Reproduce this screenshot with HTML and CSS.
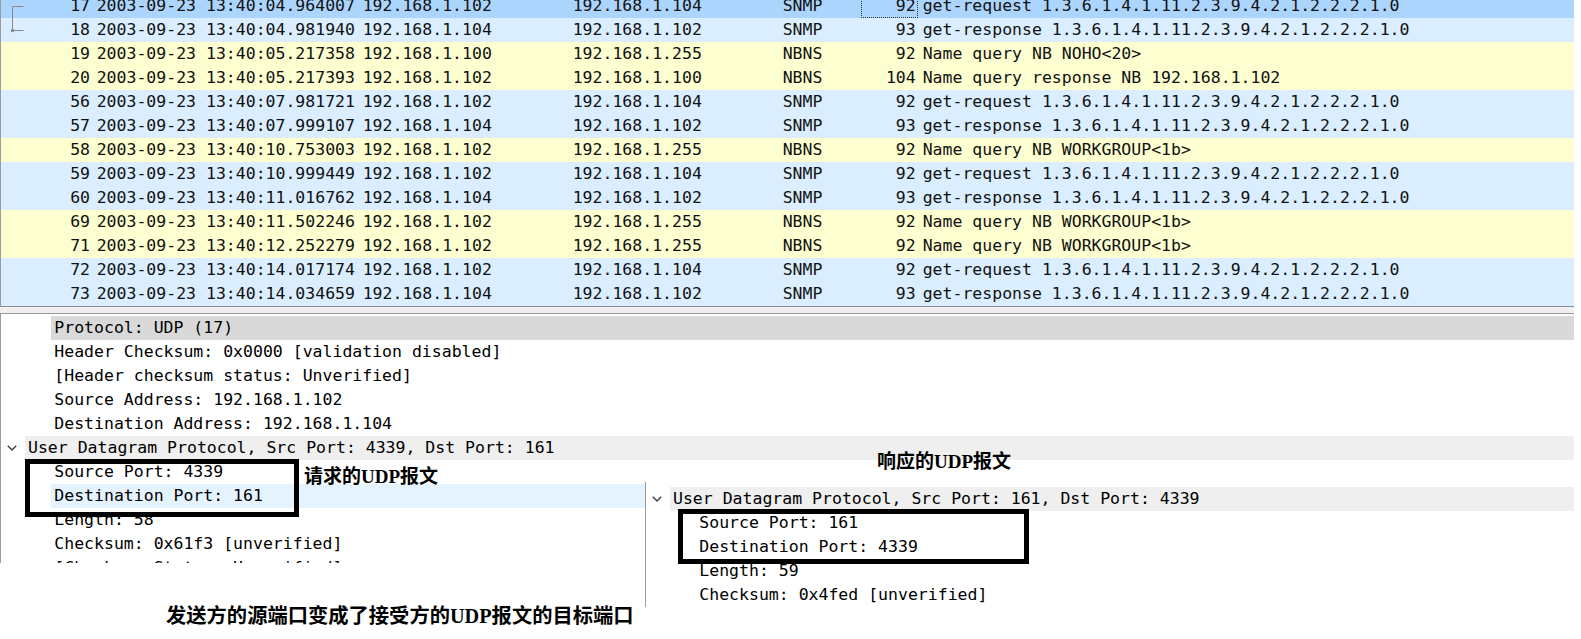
FILE: index.html
```html
<!DOCTYPE html>
<html lang="zh">
<head>
<meta charset="utf-8">
<title>UDP</title>
<link rel="stylesheet" href="styles.css">
</head>
<body>
<div class="canvas">
  <div class="app">
    <div class="packet-list">
      <div class="prow sel">
        <div class="c no"><svg class="rel" width="24" height="24" viewBox="0 0 24 24"><path d="M11.5 12.5H22.5M11.5 12.5V24" stroke="#8a8a8a" stroke-width="1" fill="none"/></svg><span>17</span></div>
        <div class="c">2003-09-23 13:40:04.964007</div><div class="c">192.168.1.102</div><div class="c">192.168.1.104</div><div class="c">SNMP</div><div class="c len focus">92</div><div class="c info">get-request 1.3.6.1.4.1.11.2.3.9.4.2.1.2.2.2.1.0</div>
      </div>
      <div class="prow udp">
        <div class="c no"><svg class="rel" width="24" height="24" viewBox="0 0 24 24"><path d="M11.5 0V12.5H22.5" stroke="#8a8a8a" stroke-width="1" fill="none"/><circle cx="11.5" cy="12.5" r="1.8" fill="#8a8a8a"/></svg><span>18</span></div>
        <div class="c">2003-09-23 13:40:04.981940</div><div class="c">192.168.1.104</div><div class="c">192.168.1.102</div><div class="c">SNMP</div><div class="c len">93</div><div class="c info">get-response 1.3.6.1.4.1.11.2.3.9.4.2.1.2.2.2.1.0</div>
      </div>
      <div class="prow nb">
        <div class="c no"><span>19</span></div>
        <div class="c">2003-09-23 13:40:05.217358</div><div class="c">192.168.1.100</div><div class="c">192.168.1.255</div><div class="c">NBNS</div><div class="c len">92</div><div class="c info">Name query NB NOHO&lt;20&gt;</div>
      </div>
      <div class="prow nb">
        <div class="c no"><span>20</span></div>
        <div class="c">2003-09-23 13:40:05.217393</div><div class="c">192.168.1.102</div><div class="c">192.168.1.100</div><div class="c">NBNS</div><div class="c len">104</div><div class="c info">Name query response NB 192.168.1.102</div>
      </div>
      <div class="prow udp">
        <div class="c no"><span>56</span></div>
        <div class="c">2003-09-23 13:40:07.981721</div><div class="c">192.168.1.102</div><div class="c">192.168.1.104</div><div class="c">SNMP</div><div class="c len">92</div><div class="c info">get-request 1.3.6.1.4.1.11.2.3.9.4.2.1.2.2.2.1.0</div>
      </div>
      <div class="prow udp">
        <div class="c no"><span>57</span></div>
        <div class="c">2003-09-23 13:40:07.999107</div><div class="c">192.168.1.104</div><div class="c">192.168.1.102</div><div class="c">SNMP</div><div class="c len">93</div><div class="c info">get-response 1.3.6.1.4.1.11.2.3.9.4.2.1.2.2.2.1.0</div>
      </div>
      <div class="prow nb">
        <div class="c no"><span>58</span></div>
        <div class="c">2003-09-23 13:40:10.753003</div><div class="c">192.168.1.102</div><div class="c">192.168.1.255</div><div class="c">NBNS</div><div class="c len">92</div><div class="c info">Name query NB WORKGROUP&lt;1b&gt;</div>
      </div>
      <div class="prow udp">
        <div class="c no"><span>59</span></div>
        <div class="c">2003-09-23 13:40:10.999449</div><div class="c">192.168.1.102</div><div class="c">192.168.1.104</div><div class="c">SNMP</div><div class="c len">92</div><div class="c info">get-request 1.3.6.1.4.1.11.2.3.9.4.2.1.2.2.2.1.0</div>
      </div>
      <div class="prow udp">
        <div class="c no"><span>60</span></div>
        <div class="c">2003-09-23 13:40:11.016762</div><div class="c">192.168.1.104</div><div class="c">192.168.1.102</div><div class="c">SNMP</div><div class="c len">93</div><div class="c info">get-response 1.3.6.1.4.1.11.2.3.9.4.2.1.2.2.2.1.0</div>
      </div>
      <div class="prow nb">
        <div class="c no"><span>69</span></div>
        <div class="c">2003-09-23 13:40:11.502246</div><div class="c">192.168.1.102</div><div class="c">192.168.1.255</div><div class="c">NBNS</div><div class="c len">92</div><div class="c info">Name query NB WORKGROUP&lt;1b&gt;</div>
      </div>
      <div class="prow nb">
        <div class="c no"><span>71</span></div>
        <div class="c">2003-09-23 13:40:12.252279</div><div class="c">192.168.1.102</div><div class="c">192.168.1.255</div><div class="c">NBNS</div><div class="c len">92</div><div class="c info">Name query NB WORKGROUP&lt;1b&gt;</div>
      </div>
      <div class="prow udp">
        <div class="c no"><span>72</span></div>
        <div class="c">2003-09-23 13:40:14.017174</div><div class="c">192.168.1.102</div><div class="c">192.168.1.104</div><div class="c">SNMP</div><div class="c len">92</div><div class="c info">get-request 1.3.6.1.4.1.11.2.3.9.4.2.1.2.2.2.1.0</div>
      </div>
      <div class="prow udp">
        <div class="c no"><span>73</span></div>
        <div class="c">2003-09-23 13:40:14.034659</div><div class="c">192.168.1.104</div><div class="c">192.168.1.102</div><div class="c">SNMP</div><div class="c len">93</div><div class="c info">get-response 1.3.6.1.4.1.11.2.3.9.4.2.1.2.2.2.1.0</div>
      </div>
    </div>
    <div class="splitter"></div>
    <div class="details">
      <div class="drow leaf selgray">Protocol: UDP (17)</div>
      <div class="drow leaf">Header Checksum: 0x0000 [validation disabled]</div>
      <div class="drow leaf">[Header checksum status: Unverified]</div>
      <div class="drow leaf">Source Address: 192.168.1.102</div>
      <div class="drow leaf">Destination Address: 192.168.1.104</div>
      <div class="drow branch"><svg class="chev" width="10" height="6" viewBox="0 0 10 6"><path d="M0.8 0.8L5 5L9.2 0.8" stroke="#3c3c3c" stroke-width="1.4" fill="none"/></svg><span class="label">User Datagram Protocol, Src Port: 4339, Dst Port: 161</span></div>
      <div class="drow leaf">Source Port: 4339</div>
      <div class="drow leaf hover">Destination Port: 161</div>
      <div class="drow leaf">Length: 58</div>
      <div class="drow leaf">Checksum: 0x61f3 [unverified]</div>
      <div class="drow leaf">[Checksum Status: Unverified]</div>
    </div>
  </div>
  <p class="caption">发送方的源端口变成了接受方的UDP报文的目标端口</p>

  <div class="resp-panel">
    <div class="drow branch"><svg class="chev" width="10" height="6" viewBox="0 0 10 6"><path d="M0.8 0.8L5 5L9.2 0.8" stroke="#3c3c3c" stroke-width="1.4" fill="none"/></svg><span class="label">User Datagram Protocol, Src Port: 161, Dst Port: 4339</span></div>
    <div class="drow leaf">Source Port: 161</div>
    <div class="drow leaf">Destination Port: 4339</div>
    <div class="drow leaf">Length: 59</div>
    <div class="drow leaf">Checksum: 0x4fed [unverified]</div>
  </div>

  <div class="mark mark-req"></div>
  <div class="mark mark-resp"></div>
  <span class="note note-req">请求的UDP报文</span>
  <span class="note note-resp">响应的UDP报文</span>
</div>
</body>
</html>
```

FILE: styles.css
```css
* { box-sizing: border-box; }

html, body {
  margin: 0;
  padding: 0;
  background: #ffffff;
}

.canvas {
  position: relative;
  width: 1581px;
  height: 639px;
  overflow: hidden;
  background: #ffffff;
  font-family: "DejaVu Sans Mono", "Liberation Mono", monospace;
  font-size: 16.5px;
  color: #111111;
}

.app {
  width: 1574px;
}

/* ---------- packet list ---------- */
.packet-list {
  height: 307px;
  overflow: hidden;
  border-left: 1px solid #9c9c9c;
  border-bottom: 1px solid #8e8e8e;
}

.prow {
  display: grid;
  grid-template-columns: 92.5px 266px 210px 210px 81px 57.5px 1fr;
  height: 24px;
  line-height: 24px;
  white-space: pre;
}

.prow:first-child {
  margin-top: -6px;
}

.prow.sel { background: #acd5fd; }
.prow.udp { background: #daeeff; }
.prow.nb  { background: #feffd0; }

.c {
  padding-left: 3.2px;
  overflow: hidden;
}

.c.no {
  display: flex;
  justify-content: space-between;
  align-items: center;
  padding-left: 0;
  padding-right: 3.5px;
}

.c.no .rel {
  display: block;
  flex: none;
}

.c.no span {
  margin-left: auto;
}

.c.len {
  text-align: right;
  padding-left: 0;
  padding-right: 2.3px;
}

.c.len.focus {
  outline: 1px dotted #333333;
  outline-offset: -1px;
}

.c.info {
  padding-left: 4.7px;
}

/* ---------- splitter ---------- */
.splitter {
  height: 6px;
  background: #f0f0f0;
}

/* ---------- details ---------- */
.details {
  height: 250px;
  overflow: hidden;
  padding-top: 2px;
  border-left: 1px solid #9c9c9c;
  border-top: 1px solid #9a9a9a;
}

.drow {
  height: 24px;
  line-height: 24px;
  white-space: pre;
  color: #000000;
}

.drow.leaf {
  margin-left: 50px;
  padding-left: 3.3px;
}

.drow.branch {
  display: flex;
  align-items: center;
}

.drow.branch .chev {
  flex: none;
  margin-left: 6px;
  margin-right: 8px;
  display: block;
}

.drow.branch .label {
  flex: 1;
  background: #efefef;
  padding-left: 3px;
  height: 24px;
}

.drow.selgray { background: #d9d9d9; }
.drow.hover   { background: #e5f3ff; }

/* ---------- caption ---------- */
.caption {
  margin: 41px 0 0 166px;
  font-family: "Liberation Serif", "Noto Sans CJK SC", serif;
  font-weight: 700;
  font-size: 20.3px;
  line-height: 24px;
  color: #000000;
}

/* ---------- response overlay panel ---------- */
.resp-panel {
  position: absolute;
  left: 645px;
  top: 482px;
  width: 929px;
  height: 125px;
  padding-top: 5px;
  background: #ffffff;
  border-left: 1px solid #9c9c9c;
}

/* ---------- annotations ---------- */
.mark {
  position: absolute;
  border: 5px solid #000000;
}

.mark-req {
  left: 25px;
  top: 459px;
  width: 274px;
  height: 58px;
}

.mark-resp {
  left: 678px;
  top: 509px;
  width: 351px;
  height: 55px;
}

.note {
  position: absolute;
  font-family: "Liberation Serif", "Noto Sans CJK SC", serif;
  font-weight: 700;
  font-size: 19px;
  line-height: 24px;
  color: #000000;
  white-space: nowrap;
}

.note-req {
  left: 304px;
  top: 465px;
}

.note-resp {
  left: 877px;
  top: 450px;
}
```
